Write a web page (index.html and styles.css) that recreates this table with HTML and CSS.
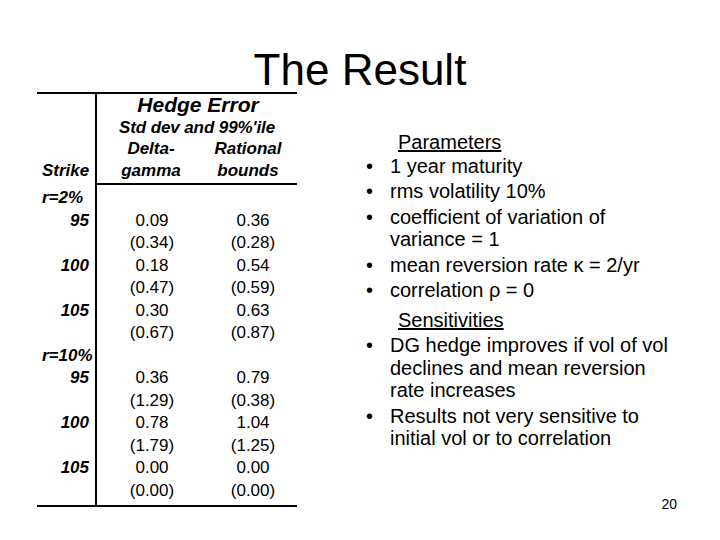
FILE: index.html
```html
<!DOCTYPE html>
<html>
<head>
<meta charset="utf-8">
<link rel="stylesheet" href="styles.css">
</head>
<body>
<div class="slide">
  <h1 class="title">The Result</h1>
  <div class="content">
    <div class="tbl">
      <div class="stub">
        <div class="stub-head"><span>Strike</span></div>
        <div class="stub-body">
          <div class="lbl">r=2%</div>
          <div class="k">95</div>
          <div class="k"></div>
          <div class="k">100</div>
          <div class="k"></div>
          <div class="k">105</div>
          <div class="k"></div>
          <div class="lbl">r=10%</div>
          <div class="k">95</div>
          <div class="k"></div>
          <div class="k">100</div>
          <div class="k"></div>
          <div class="k">105</div>
          <div class="k"></div>
        </div>
      </div>
      <div class="main">
        <div class="main-head">
          <div class="he">Hedge Error</div>
          <div class="sd">Std dev and 99%'ile</div>
          <div class="subs">
            <div class="sub">Delta-<br>gamma</div>
            <div class="sub sub2">Rational<br>bounds</div>
          </div>
        </div>
        <div class="main-body">
          <div class="v"></div><div class="v v2"></div>
          <div class="v">0.09</div><div class="v v2">0.36</div>
          <div class="v">(0.34)</div><div class="v v2">(0.28)</div>
          <div class="v">0.18</div><div class="v v2">0.54</div>
          <div class="v">(0.47)</div><div class="v v2">(0.59)</div>
          <div class="v">0.30</div><div class="v v2">0.63</div>
          <div class="v">(0.67)</div><div class="v v2">(0.87)</div>
          <div class="v"></div><div class="v v2"></div>
          <div class="v">0.36</div><div class="v v2">0.79</div>
          <div class="v">(1.29)</div><div class="v v2">(0.38)</div>
          <div class="v">0.78</div><div class="v v2">1.04</div>
          <div class="v">(1.79)</div><div class="v v2">(1.25)</div>
          <div class="v">0.00</div><div class="v v2">0.00</div>
          <div class="v">(0.00)</div><div class="v v2">(0.00)</div>
        </div>
      </div>
    </div>
    <div class="notes">
      <p class="head"><u>Parameters</u></p>
      <p class="item first"><span class="dot">•</span><span class="txt">1 year maturity</span></p>
      <p class="item"><span class="dot">•</span><span class="txt">rms volatility 10%</span></p>
      <p class="item"><span class="dot">•</span><span class="txt">coefficient of variation of variance = 1</span></p>
      <p class="item"><span class="dot">•</span><span class="txt">mean reversion rate κ = 2/yr</span></p>
      <p class="item"><span class="dot">•</span><span class="txt">correlation ρ = 0</span></p>
      <p class="head head2"><u>Sensitivities</u></p>
      <p class="item"><span class="dot">•</span><span class="txt">DG hedge improves if vol of vol declines and mean reversion rate increases</span></p>
      <p class="item"><span class="dot">•</span><span class="txt">Results not very sensitive to initial vol or to correlation</span></p>
      <div class="pageno">20</div>
    </div>
  </div>
</div>
</body>
</html>
```

FILE: styles.css
```css
html, body {
  margin: 0;
  padding: 0;
  background: #fff;
}
body {
  font-family: "Liberation Sans", Arial, sans-serif;
  color: #000;
}
.slide {
  width: 720px;
  height: 540px;
  overflow: hidden;
}
.title {
  margin: 0;
  padding-top: 48px;
  font-weight: normal;
  font-size: 44px;
  line-height: 44px;
  text-align: center;
}
.content {
  display: flex;
  align-items: flex-start;
}
.tbl {
  display: flex;
  margin-left: 37px;
  width: 260px;
  border-top: 2px solid #000;
  border-bottom: 2px solid #000;
  font-size: 17px;
}
.stub {
  width: 58px;
  border-right: 2px solid #000;
  font-weight: bold;
  font-style: italic;
}
.stub-head {
  height: 91px;
  box-sizing: border-box;
  display: flex;
  align-items: flex-end;
  padding: 0 0 3px 5px;
  line-height: 22px;
}
.stub-body {
  padding: 2px 0 3px;
}
.k, .lbl {
  height: 22.5px;
  line-height: 22.5px;
  white-space: nowrap;
}
.k {
  text-align: right;
  padding-right: 6px;
}
.lbl {
  padding-left: 5px;
}
.main {
  flex: 1;
}
.main-head {
  height: 91px;
  box-sizing: border-box;
  border-bottom: 2px solid #000;
  font-weight: bold;
  font-style: italic;
  text-align: center;
}
.he {
  font-size: 21px;
  line-height: 21px;
  padding-left: 2px;
}
.sd {
  padding-top: 3px;
  line-height: 20px;
  white-space: nowrap;
  letter-spacing: -0.1px;
}
.subs {
  display: grid;
  grid-template-columns: 108px 92px;
  line-height: 22px;
}
.sub2 {
  padding-right: 6px;
}
.main-body {
  display: grid;
  grid-template-columns: 108px 92px;
  padding: 2px 0 3px;
}
.v {
  height: 22.5px;
  line-height: 22.5px;
  text-align: center;
  padding-left: 2px;
}
.v2 {
  padding-left: 4px;
}
.notes {
  margin-left: 69px;
  width: 311px;
  padding-top: 39px;
  font-size: 20px;
  line-height: 22.5px;
}
.notes p {
  margin: 3px 0 0;
}
.notes p:first-child {
  margin-top: 0;
}
.notes p.first {
  margin-top: 1px;
}
.notes p.head2 {
  margin-top: 7px;
}
.head {
  padding-left: 32px;
}
.item {
  display: flex;
}
.dot {
  width: 24px;
  flex: none;
}
.txt {
  flex: 1;
}
.pageno {
  margin-top: 46px;
  font-size: 14px;
  line-height: 16px;
  text-align: right;
}
```
